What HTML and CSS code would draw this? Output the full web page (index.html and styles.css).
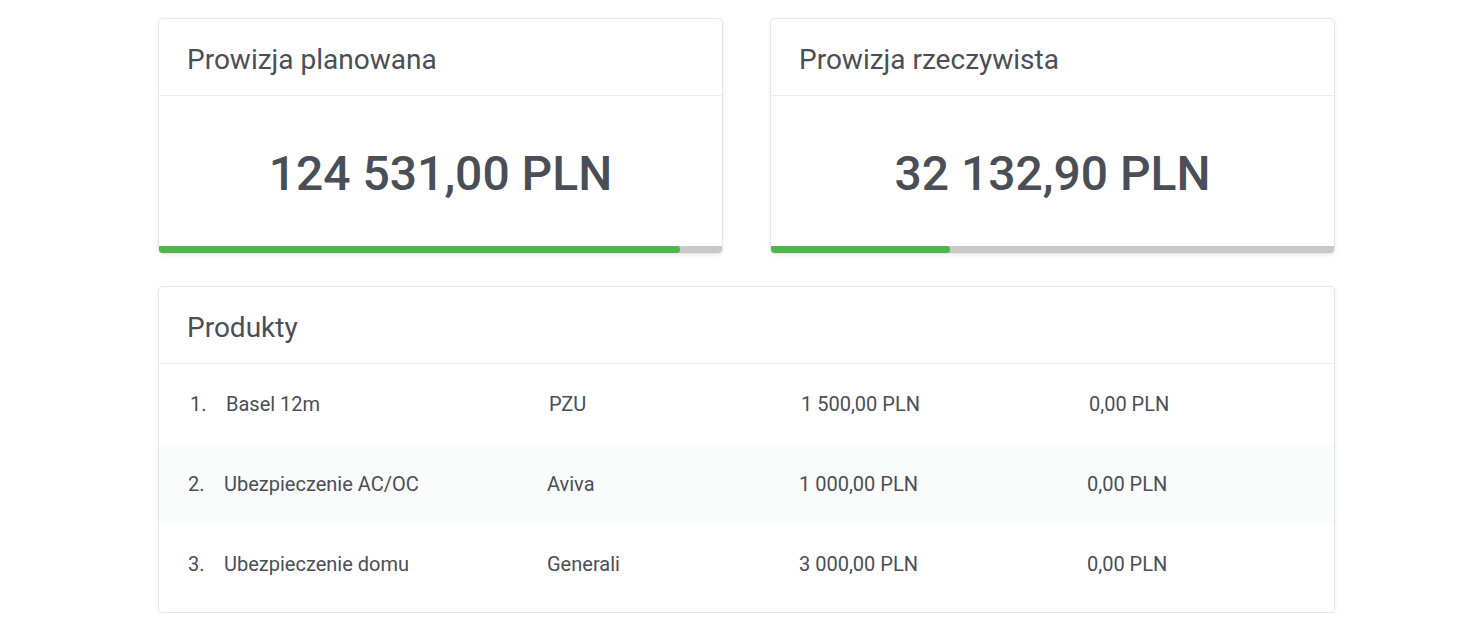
FILE: index.html
```html
<!DOCTYPE html>
<html lang="pl">
<head>
    <meta charset="UTF-8">
    <meta name="viewport" content="width=device-width, initial-scale=1.0">
    <title>Prowizje</title>
    <link rel="stylesheet" href="styles.css">
</head>
<body>
    <div class="container">
        <!-- Summary cards -->
        <div class="summary">
            <div class="card">
                <div class="card-header">Prowizja planowana</div>
                <div class="card-value">124 531,00 PLN</div>
                <div class="progress">
                    <div class="progress-fill" style="width: 92.5%"></div>
                </div>
            </div>

            <div class="card">
                <div class="card-header">Prowizja rzeczywista</div>
                <div class="card-value">32 132,90 PLN</div>
                <div class="progress">
                    <div class="progress-fill" style="width: 31.8%"></div>
                </div>
            </div>
        </div>

        <!-- Products list -->
        <div class="card products">
            <div class="card-header">Produkty</div>
            <div class="product-list">
                <div class="product-row first">
                    <span>1.</span>
                    <span>Basel 12m</span>
                    <span>PZU</span>
                    <span>1 500,00 PLN</span>
                    <span>0,00 PLN</span>
                </div>
                <div class="product-row striped">
                    <span>2.</span>
                    <span>Ubezpieczenie AC/OC</span>
                    <span>Aviva</span>
                    <span>1 000,00 PLN</span>
                    <span>0,00 PLN</span>
                </div>
                <div class="product-row">
                    <span>3.</span>
                    <span>Ubezpieczenie domu</span>
                    <span>Generali</span>
                    <span>3 000,00 PLN</span>
                    <span>0,00 PLN</span>
                </div>
            </div>
        </div>
    </div>
</body>
</html>
```

FILE: styles.css
```css
body {
    margin: 0;
    font-family: Roboto, "Liberation Sans", sans-serif;
    background-color: #fff;
    color: #4a4e57;
}

.container {
    width: 1177px;
    margin-left: 158px;
    padding-top: 18px;
}

/* Top row with two summary cards */
.summary {
    display: flex;
    gap: 47px;
    margin-bottom: 32px;
}

.card {
    flex: 1;
    background-color: #fff;
    border: 1px solid #e6e6e6;
    border-radius: 5px;
    box-shadow: 0 1px 4px rgba(0, 0, 0, 0.08);
    overflow: hidden;
}

.card-header {
    height: 77px;
    padding: 5px 28px 0;
    box-sizing: border-box;
    display: flex;
    align-items: center;
    font-size: 28px;
    border-bottom: 1px solid #ededed;
}

.card-value {
    height: 150px;
    display: flex;
    align-items: center;
    justify-content: center;
    font-size: 48px;
    font-weight: 500;
    padding-top: 4px;
    box-sizing: border-box;
}

/* Progress bar at the bottom of a card */
.progress {
    height: 7px;
    background-color: #c9c9c9;
}

.progress-fill {
    height: 100%;
    background-color: #50b64c;
    border-radius: 0 3px 3px 0;
}

/* Products table */
.product-list {
    padding-bottom: 8px;
}

.product-row {
    display: grid;
    grid-template-columns: 36px 323px 252px 288px 1fr;
    align-items: center;
    height: 80px;
    padding-left: 29px;
    font-size: 20px;
}

.product-row.first {
    padding-left: 31px;
}

.product-row.striped {
    background-color: #fafbfb;
}
```
